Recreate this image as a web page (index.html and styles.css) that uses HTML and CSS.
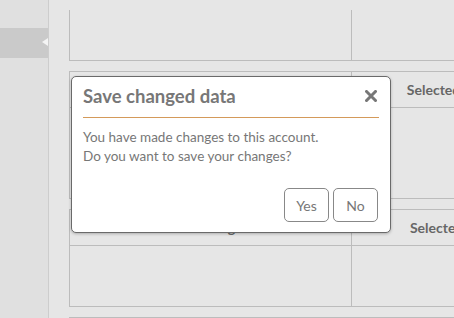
FILE: index.html
```html
<!DOCTYPE html>
<html lang="en">
<head>
    <meta charset="UTF-8">
    <meta name="viewport" content="width=device-width, initial-scale=1.0">
    <title>Accounts</title>
    <link rel="stylesheet" href="styles.css">
</head>
<body>

<div class="app">
    <div class="sidebar">
        <div class="side-item active"></div>
    </div>

    <div class="main">
        <div class="panel panel-top">
            <div class="cell body-cell first short"></div>
            <div class="cell body-cell short"></div>
        </div>

        <div class="panel">
            <div class="cell head first">Current settings</div>
            <div class="cell head">Selected accounts</div>
            <div class="cell body-cell first tall"></div>
            <div class="cell body-cell tall"></div>
        </div>

        <div class="panel">
            <div class="cell head first">Existing</div>
            <div class="cell head">Selected account</div>
            <div class="cell body-cell first"></div>
            <div class="cell body-cell"></div>
        </div>

        <div class="panel">
            <div class="cell head first"></div>
            <div class="cell head"></div>
        </div>
    </div>

    <div class="dialog">
        <div class="dialog-header">
            <span class="dialog-title">Save changed data</span>
            <svg class="close" width="12" height="12" viewBox="0 0 12 12">
                <path d="M1.5 1.5 L10.5 10.5 M10.5 1.5 L1.5 10.5" stroke="#777" stroke-width="3" stroke-linecap="square"/>
            </svg>
        </div>
        <div class="dialog-body">
            You have made changes to this account.<br>
            Do you want to save your changes?
        </div>
        <div class="dialog-footer">
            <button class="btn">Yes</button>
            <button class="btn">No</button>
        </div>
    </div>
</div>

</body>
</html>
```

FILE: styles.css
```css
body {
    margin: 0;
    font-family: 'Lato', 'Open Sans', sans-serif;
    background: #e6e6e6;
    overflow: hidden;
}

.app {
    position: relative;
    display: flex;
    height: 318px;
    overflow: hidden;
}

.sidebar {
    width: 48px;
    flex-shrink: 0;
    background: #e0e0e0;
    border-right: 1px solid #cdcdcd;
    padding-top: 28px;
}

.side-item {
    position: relative;
    height: 30px;
}

.side-item.active {
    background: #cacaca;
}

.side-item.active::after {
    content: "";
    position: absolute;
    right: 0;
    top: 10px;
    border-top: 4px solid transparent;
    border-bottom: 4px solid transparent;
    border-right: 6px solid #f4f4f4;
}

.main {
    flex: 1;
    padding: 10px 0 0 20px;
    display: flex;
    flex-direction: column;
    gap: 10px;
    min-width: 0;
}

.panel {
    display: grid;
    grid-template-columns: 282px 222px;
    border: 1px solid #bcbcbc;
    width: 505px;
    flex-shrink: 0;
}

.panel-top {
    border-top: none;
}

.cell.first {
    border-right: 1px solid #bcbcbc;
}

.head {
    height: 35px;
    display: flex;
    align-items: center;
    justify-content: center;
    font-size: 14px;
    font-weight: 700;
    color: #666;
    border-bottom: 1px solid #bcbcbc;
}

.body-cell {
    height: 60px;
}

.body-cell.short {
    height: 50px;
}

.body-cell.tall {
    height: 90px;
}

.dialog {
    position: absolute;
    left: 71px;
    top: 76px;
    width: 318px;
    height: 155px;
    background: #fff;
    border: 1px solid #6a6a6a;
    border-radius: 5px;
    box-shadow: 0 1px 3px rgba(0, 0, 0, 0.25);
    color: #777;
}

.dialog-header {
    margin: 0 11px;
    padding: 7px 0 9px;
    border-bottom: 1px solid #d49a5a;
    display: flex;
    align-items: center;
    justify-content: space-between;
}

.dialog-title {
    font-size: 18.5px;
    line-height: 24px;
    font-weight: 700;
}

.close {
    margin-right: 2px;
}

.dialog-body {
    padding: 10px 11px 0;
    font-size: 13.5px;
    line-height: 19px;
}

.dialog-footer {
    display: flex;
    justify-content: flex-end;
    gap: 4px;
    padding: 22px 12px 0 0;
}

.btn {
    width: 45px;
    height: 34px;
    background: #fff;
    border: 1px solid #888;
    border-radius: 5px;
    font-family: 'Lato', 'Open Sans', sans-serif;
    font-size: 14px;
    color: #777;
    padding: 0;
}
```
